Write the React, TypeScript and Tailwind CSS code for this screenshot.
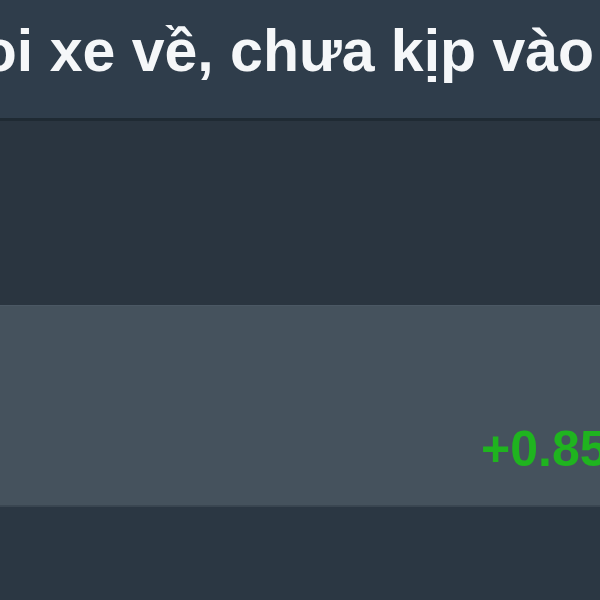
export default function App() {
  return (
    <div className="w-[600px] h-[600px] overflow-hidden bg-[#2a3540] flex flex-col font-['Liberation_Sans',Arial,sans-serif]">
      <div className="h-[118px] shrink-0 bg-[#2f3d4b] overflow-hidden pt-[22px]">
        <h1 className="ml-[-52px] whitespace-nowrap text-[59px] leading-none font-bold text-[#f5f7f9]">
          coi xe về, chưa kịp vào nhà
        </h1>
      </div>
      <div className="h-[3px] shrink-0 bg-[#1f2a33]" />
      <div className="h-[184px] shrink-0 bg-[#2a3540]" />
      <div className="h-[202px] shrink-0 bg-[#45525d] border-t border-[#4b5864] border-b-2 border-b-[#3a4651] overflow-hidden pt-[118px]">
        <div className="pl-[481px] whitespace-nowrap text-[50px] leading-none font-bold text-[#1fb41f]">
          +0.85%
        </div>
      </div>
      <div className="flex-1 bg-[#2b3743]" />
    </div>
  );
}
